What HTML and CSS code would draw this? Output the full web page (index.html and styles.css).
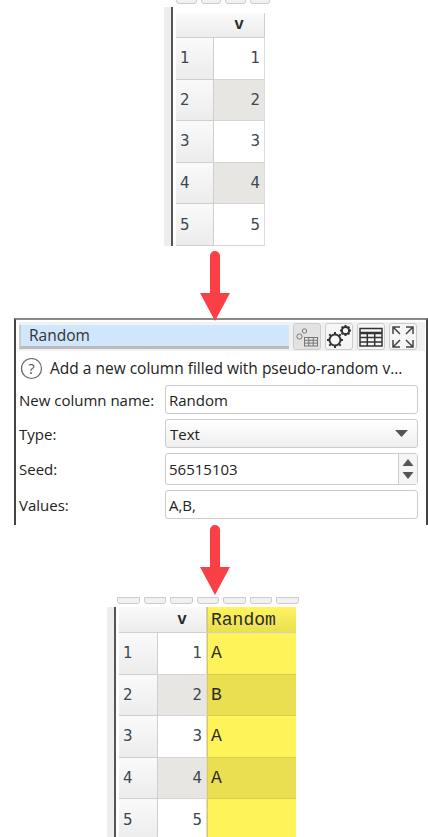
FILE: index.html
```html
<!DOCTYPE html>
<html lang="en">
<head>
<meta charset="utf-8">
<title>Random column transform</title>
<link rel="stylesheet" href="styles.css">
</head>
<body>
<main class="page">
  <section class="sheet sheet-before">
    <div class="tabs"><i></i><i></i><i></i><i></i></div>
    <div class="sheet-body">
      <div class="edge"></div>
      <div class="grid">
        <div class="hd corner"></div><div class="hd col">v</div>
        <div class="rh">1</div><div class="val">1</div>
        <div class="rh">2</div><div class="val alt">2</div>
        <div class="rh">3</div><div class="val">3</div>
        <div class="rh">4</div><div class="val alt">4</div>
        <div class="rh">5</div><div class="val">5</div>
      </div>
    </div>
  </section>

  <section class="dialog">
    <div class="dialog-frame">
      <div class="title-row">
        <div class="title">Random</div>
        <button class="tool active"><svg width="24" height="20" viewBox="0 0 24 20"><g fill="none" stroke="#777" stroke-width="1"><circle cx="4.5" cy="9.5" r="2.6"/><circle cx="9.5" cy="4" r="2.2"/><rect x="9.5" y="10.5" width="13" height="8.5"/><path d="M9.5 13.3h13M9.5 16.1h13M13.8 10.5V19M18.2 10.5V19"/></g></svg></button>
        <button class="tool"><svg width="26" height="25" viewBox="0 0 26 25"><g fill="none" stroke="#333" stroke-width="2"><circle cx="9" cy="16" r="5.5"/><circle cx="19.5" cy="6.5" r="3.6"/><path d="M9 8v2.5M9 21.500V24M1 16h2.500M14.500 16H17M3.300 10.300l1.800 1.800M12.900 19.900l1.800 1.800M3.300 21.700l1.800-1.800M12.900 12.100l1.800-1.800M19.500 1v2M19.500 10v2M14 6.500h2M23 6.500h2M15.600 2.600l1.400 1.400M22 9l1.400 1.400M15.600 10.400L17 9M22 4l1.400-1.400"/></g></svg></button>
        <button class="tool"><svg width="24" height="20" viewBox="0 0 24 20"><g fill="none" stroke="#333" stroke-width="1.500"><rect x="1" y="1.500" width="22" height="17.500"/><path d="M1 6h22" stroke-width="2.500"/><path d="M1 10.500h22M1 15h22M8.300 6v13M15.700 6v13"/></g></svg></button>
        <button class="tool"><svg width="24" height="24" viewBox="0 0 24 24"><g fill="none" stroke="#444" stroke-width="1.500"><path d="M2 9V2h7M2 2l7 7M22 9V2h-7M22 2l-7 7M2 15v7h7M2 22l7-7M22 15v7h-7M22 22l-7-7"/></g></svg></button>
      </div>
      <div class="help-row">
        <svg class="help" width="23" height="23" viewBox="0 0 23 23"><circle cx="11.500" cy="11.500" r="10" fill="none" stroke="#666" stroke-width="1.200"/><text x="11.500" y="17" text-anchor="middle" class="help-mark">?</text></svg>
        <span class="help-text">Add a new column filled with pseudo-random v...</span>
      </div>
      <div class="form">
        <label class="lbl">New column name:</label><div class="field"><span>Random</span></div>
        <label class="lbl">Type:</label>
        <div class="field select"><span>Text</span><svg width="16" height="7" viewBox="0 0 16 7"><path d="M1 0h13L7.500 7z" fill="#555"/></svg></div>
        <label class="lbl">Seed:</label>
        <div class="field spin"><span>56515103</span><div class="spinner"><svg width="12" height="7" viewBox="0 0 12 7"><path d="M6 0l5.500 7H.5z" fill="#555"/></svg><svg width="12" height="7" viewBox="0 0 12 7"><path d="M.5 0h11L6 7z" fill="#555"/></svg></div></div>
        <label class="lbl">Values:</label><div class="field"><span>A,B,</span></div>
      </div>
    </div>
  </section>

  <section class="sheet sheet-after">
    <div class="tabs"><i></i><i></i><i></i><i></i><i></i><i></i><i></i></div>
    <div class="sheet-body">
      <div class="edge"></div>
      <div class="grid grid-wide">
        <div class="hd corner"></div><div class="hd col">v</div><div class="hd col new">Random</div>
        <div class="rh">1</div><div class="val">1</div><div class="new-cell">A</div>
        <div class="rh">2</div><div class="val alt">2</div><div class="new-cell alt-new">B</div>
        <div class="rh">3</div><div class="val">3</div><div class="new-cell">A</div>
        <div class="rh">4</div><div class="val alt">4</div><div class="new-cell alt-new">A</div>
        <div class="rh">5</div><div class="val">5</div><div class="new-cell"></div>
      </div>
    </div>
  </section>

  <svg class="arrow arrow-one" width="32" height="70" viewBox="0 0 32 70"><path d="M11 5a5 5 0 0 1 10 0v37h10L16 70 1 42h10z" fill="#fb3f47"/></svg>
  <svg class="arrow arrow-two" width="32" height="70" viewBox="0 0 32 70"><path d="M11 5a5 5 0 0 1 10 0v37h10L16 70 1 42h10z" fill="#fb3f47"/></svg>
</main>
</body>
</html>
```
FILE: styles.css
```css
* { box-sizing: border-box; }
html, body { margin: 0; background: #fff; }
.page {
  position: relative;
  width: 428px;
  height: 837px;
  overflow: hidden;
  font-family: "Open Sans", "Noto Sans", sans-serif;
  color: #2b2b2b;
}
.sheet-before { margin-left: 164px; width: 106px; }
.sheet-after { margin: 70px 0 0 107px; width: 192px; }
.tabs { display: flex; gap: 4px; height: 7px; padding-left: 12px; overflow: hidden; }
.sheet-after .tabs { padding-left: 10px; height: 12px; margin-top: 0; padding-top: 5px; }
.tabs i {
  display: block;
  width: 23px;
  height: 7px;
  margin-top: -3px;
  border: 1px solid #ccc;
  border-radius: 0 0 3px 3px;
  background: #f1f1f1;
}
.sheet-body { display: flex; }
.edge {
  width: 9px;
  margin-right: 3px;
  background: #eeeeee;
  border-right: 2px solid #555;
}
.sheet-before .grid { margin-top: 6px; }
.grid {
  display: grid;
  grid-template-columns: 38px 51px;
  grid-template-rows: 25px repeat(5, 41.6px);
  font-family: "Liberation Mono", monospace;
  font-size: 17px;
}
.grid-wide { grid-template-columns: 39px 49px 89px; grid-template-rows: 26px repeat(5, 41.6px); }
.hd, .rh {
  display: flex;
  align-items: center;
  background: linear-gradient(#fafafa, #ececec);
  border-right: 1px solid #cfcfcf;
  border-bottom: 1px solid #cfcfcf;
}
.corner { border-right: 0; }
.col { justify-content: center; font-weight: 700; font-size: 16px; }
.rh { padding-left: 4px; font-family: "DejaVu Sans", sans-serif; font-size: 15px; color: #3a4652; }
.val {
  display: flex;
  align-items: center;
  justify-content: flex-end;
  padding-right: 4px;
  background: #fff;
  font-family: "DejaVu Sans", sans-serif;
  font-size: 15px;
  color: #3a4652;
  border-bottom: 1px solid #d4d4d4;
  border-right: 1px solid #ddd;
}
.val.alt { background: #e8e6e3; }
.new {
  justify-content: flex-start;
  padding-left: 3px;
  font-weight: 400;
  font-size: 18px;
  background: linear-gradient(#fff35f, #eadf50);
  border-right: 0;
  border-left: 1px solid #d8cf4c;
}
.new-cell {
  display: flex;
  align-items: center;
  padding-left: 3px;
  background: #fff35a;
  border-left: 1px solid #d8cf4c;
  border-bottom: 1px solid #d8cf4c;
  font-size: 18px;
}
.new-cell.alt-new { background: #eadf50; }

.dialog { margin: 64px 0 0 7px; width: 421px; height: 207px; }
.sheet-before { height: 254px; }
.dialog-frame {
  width: 414px;
  height: 207px;
  margin-left: 7px;
  border-left: 2px solid #444;
  border-right: 2px solid #444;
  border-top: 2px solid #888;
  padding: 2px 1px 0 3px;
  background: #fff;
}
.title-row { display: flex; gap: 4px; height: 29px; background: #f1f1f1; margin: 0 0 0 0; align-items: center; }
.title {
  width: 270px;
  height: 24px;
  margin-right: 0;
  padding-left: 8px;
  background: #cfe6fb;
  border-bottom: 3px solid #bbb;
  border-left: 2px solid #ccc;
  font-size: 15.500px;
  line-height: 21px;
  font-weight: 400;
  color: #333;
}
.tool {
  display: flex;
  align-items: center;
  justify-content: center;
  width: 28px;
  height: 27px;
  padding: 0;
  background: #f6f6f6;
  border: 1px solid #ccc;
  border-radius: 3px;
}
.tool.active { background: #e2e2e2; }
.help-row { display: flex; align-items: center; height: 34px; padding-left: 0; gap: 7px; margin-left: 1px; }
.help-mark { font-family: "Open Sans", sans-serif; font-size: 15px; fill: #555; }
.help-text { font-size: 15.500px; white-space: nowrap; color: #222; }
.form {
  display: grid;
  grid-template-columns: 146px 253px;
  grid-template-rows: 29px 29px 32px 29px;
  row-gap: 5px;
  align-items: stretch;
}
.lbl { display: flex; align-items: center; font-size: 15px; color: #222; white-space: nowrap; }
.field {
  display: flex;
  align-items: center;
  justify-content: space-between;
  padding-left: 3px;
  background: #fff;
  border: 1px solid #ccc;
  border-radius: 3px;
  font-size: 15px;
  color: #222;
}
.select { padding: 0 7px 0 4px; background: linear-gradient(#fff, #efefef); }
.spin { padding-right: 0; }
.spinner {
  display: flex;
  flex-direction: column;
  align-items: center;
  justify-content: center;
  gap: 6px;
  width: 19px;
  height: 100%;
  border-left: 1px solid #ccc;
  background: #f5f5f5;
}

.arrow { position: absolute; left: 199px; }
.arrow-one { top: 251px; }
.arrow-two { top: 525px; }
```
